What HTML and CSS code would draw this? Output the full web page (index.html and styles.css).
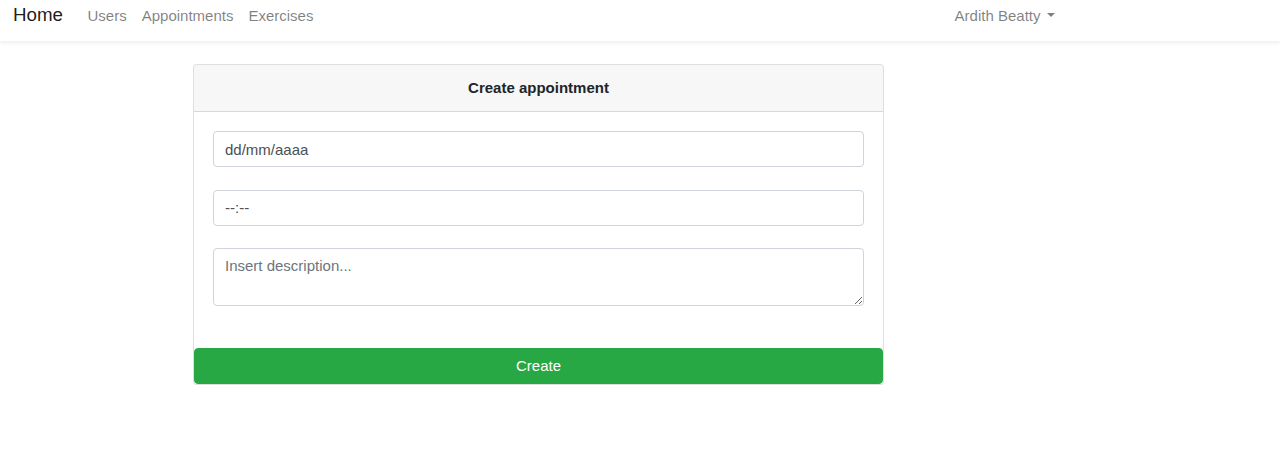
FILE: index.html
```html
<!DOCTYPE html>
<html lang="en">
<head>
<meta charset="utf-8">
<title>Create appointment</title>
<link rel="stylesheet" href="styles.css">
</head>
<body>
<nav class="navbar">
  <a class="brand" href="#">Home</a>
  <ul class="nav-links">
    <li><a href="#">Users</a></li>
    <li><a href="#">Appointments</a></li>
    <li><a href="#">Exercises</a></li>
  </ul>
  <div class="user-menu">
    <a class="dropdown-toggle" href="#">Ardith Beatty</a>
  </div>
</nav>
<main class="main">
  <section class="card">
    <header class="card-header">Create appointment</header>
    <form class="card-body">
      <div class="form-group"><input class="form-control" type="text" value="dd/mm/aaaa"></div>
      <div class="form-group"><input class="form-control" type="text" value="--:--"></div>
      <div class="form-group"><textarea class="form-control textarea" rows="2" placeholder="Insert description..."></textarea></div>
    </form>
    <button class="btn-create" type="button">Create</button>
  </section>
</main>
</body>
</html>
```
FILE: styles.css
```css
* { box-sizing: border-box; }
html, body { margin: 0; padding: 0; background: #fff; }
body {
  font-family: "Liberation Sans", Arial, Helvetica, sans-serif;
  font-size: 15px;
  line-height: 1.5;
  color: #212529;
}
a { text-decoration: none; }

.navbar {
  display: flex;
  align-items: flex-start;
  height: 41px;
  padding: 0 218px 0 13px;
  background: #fff;
  box-shadow: 0 2px 4px rgba(0, 0, 0, 0.07);
}
.brand {
  font-size: 18.75px;
  line-height: 28px;
  color: rgba(0, 0, 0, 0.9);
  margin-right: 17px;
  margin-top: 1px;
}
.nav-links {
  display: flex;
  list-style: none;
  margin: 4.5px 0 0;
  padding: 0;
  flex: 1;
}
.nav-links a {
  display: block;
  padding: 0 7.5px;
  color: rgba(0, 0, 0, 0.5);
  line-height: 22px;
}
.user-menu {
  margin-top: 4.5px;
}
.user-menu .dropdown-toggle {
  display: flex;
  align-items: center;
  padding: 0 7.5px;
  color: rgba(0, 0, 0, 0.5);
  line-height: 22px;
}
.dropdown-toggle::after {
  content: "";
  display: inline-block;
  margin-left: 6px;
  border-top: 4.5px solid;
  border-right: 4.5px solid transparent;
  border-left: 4.5px solid transparent;
  margin-top: -1px;
}

.main {
  padding: 23px 0 0 193px;
}
.card {
  width: 691px;
  border: 1px solid rgba(0, 0, 0, 0.125);
  border-radius: 4px;
  display: flex;
  flex-direction: column;
  background: #fff;
}
.card-header {
  background: #f7f7f7;
  border-bottom: 1px solid rgba(0, 0, 0, 0.125);
  border-radius: 4px 4px 0 0;
  padding: 12px 18.75px 11.5px;
  text-align: center;
  font-weight: bold;
  font-size: 15px;
  line-height: 22.5px;
}
.card-body {
  padding: 19px 18.75px 19.5px;
  margin: 0;
}
.form-group { margin-bottom: 22.5px; }
.form-control {
  display: block;
  width: 100%;
  height: 36px;
  padding: 5.6px 11.25px;
  font-family: inherit;
  font-size: 15px;
  line-height: 22.5px;
  color: #495057;
  background: #fff;
  border: 1px solid #ced4da;
  border-radius: 4px;
  margin: 0;
}
.textarea {
  height: 58px;
  resize: vertical;
}
.textarea::placeholder { color: #6c757d; opacity: 1; }
.btn-create {
  display: block;
  width: 100%;
  height: 36px;
  margin: 0;
  border: 1px solid #28a745;
  background: #28a745;
  color: #fff;
  font-family: inherit;
  font-size: 15px;
  line-height: 22.5px;
  border-radius: 4px;
  cursor: pointer;
}
```
